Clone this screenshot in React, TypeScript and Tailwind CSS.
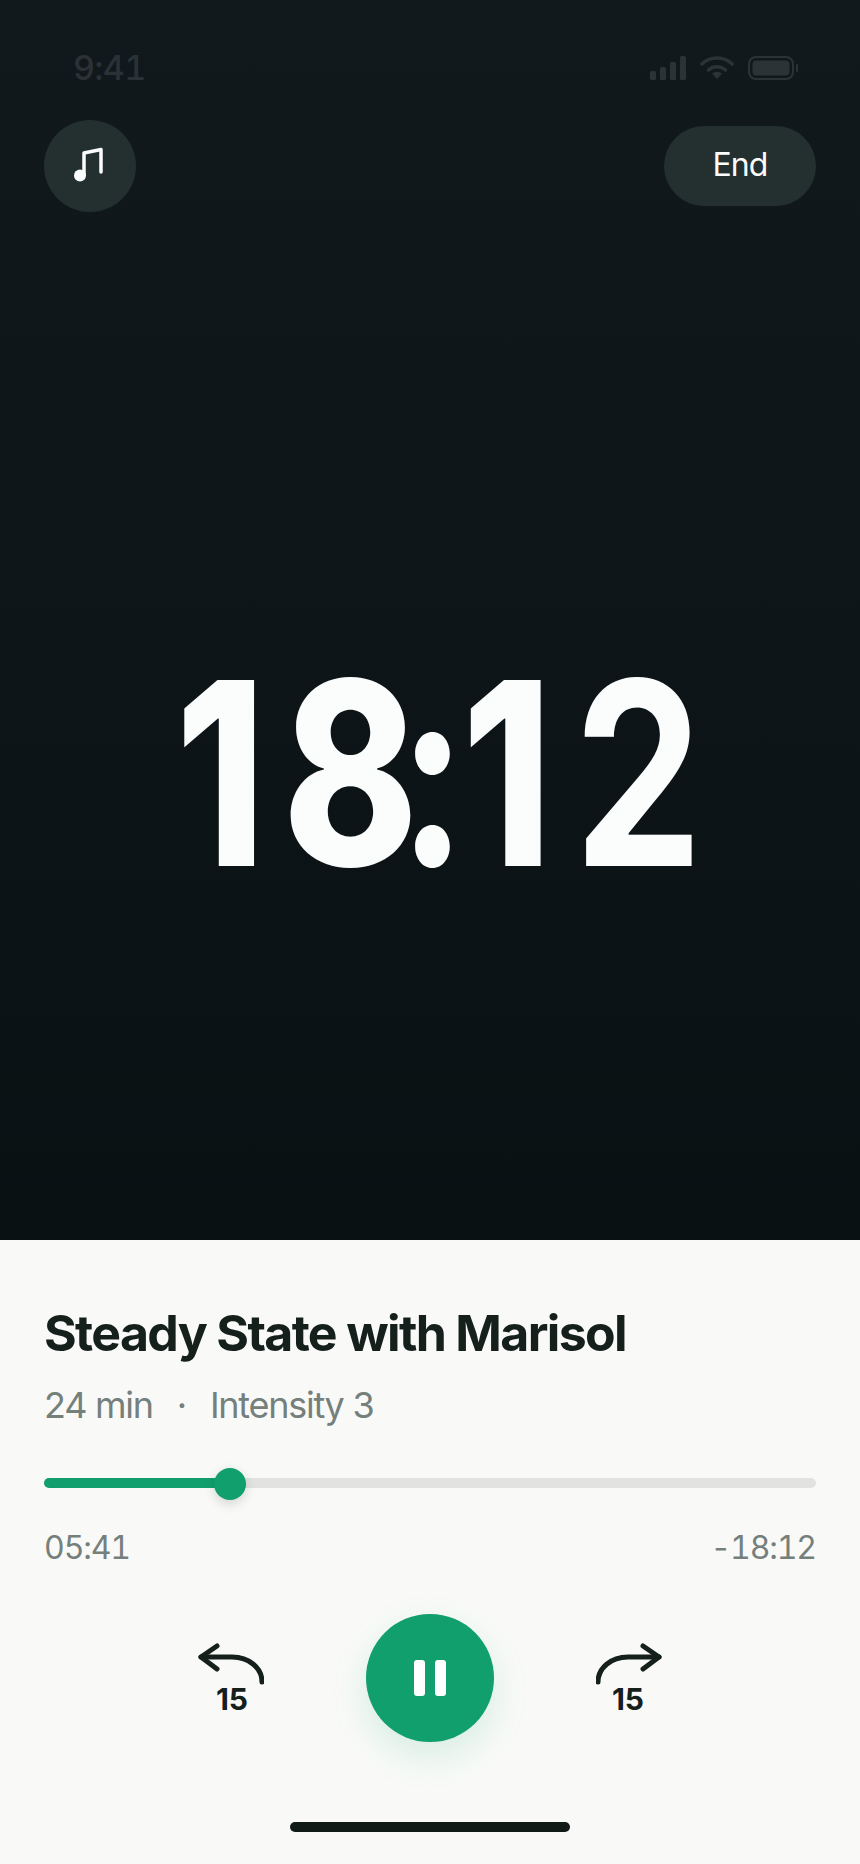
function SkipIcon({ flip }: { flip?: boolean }) {
  return (
    <svg width="68" height="46" viewBox="0 0 68 46" fill="none" stroke="#15201d" strokeWidth="5" strokeLinecap="round" strokeLinejoin="round" className={flip ? '-scale-x-100' : ''}>
      <path d="M66 40C66 26 53 15 36 15H5" />
      <path d="M21 4L5 15L21 27" />
    </svg>
  );
}

export default function App() {
  return (
    <div className="w-[860px] h-[1864px] overflow-hidden bg-[#f9faf8] font-['Inter',sans-serif]">
      <div className="h-[1240px] bg-gradient-to-b from-[#11191d] to-[#0a1113]">
        <div className="pt-[52px] h-[120px] pl-[73px] pr-[60px] flex items-start justify-between">
          <span className="text-[34px] leading-[32px] font-medium tabular-nums tracking-[-0.02em] text-[#2a3235]">9:41</span>
          <div className="flex items-center gap-[14px] mt-[4px] -translate-x-[2px]">
            <svg width="36" height="24" viewBox="0 0 36 24" fill="#2b3336">
              <rect x="0" y="15" width="6" height="9" rx="1.5" />
              <rect x="10" y="11" width="6" height="13" rx="1.5" />
              <rect x="20" y="6" width="6" height="18" rx="1.5" />
              <rect x="30" y="0" width="6" height="24" rx="1.5" />
            </svg>
            <svg width="34" height="24" viewBox="0 0 34 24" fill="none" stroke="#2b3336" strokeWidth="3.5" strokeLinecap="round">
              <path d="M2 8C10 0 24 0 32 8" />
              <path d="M8.5 14C13 9.5 21 9.5 25.5 14" />
              <path d="M12 17.5L17 23L22 17.5C19 15 15 15 12 17.5Z" fill="#2b3336" stroke="none" />
            </svg>
            <svg width="50" height="24" viewBox="0 0 50 24" fill="none">
              <rect x="1" y="1" width="44" height="22" rx="7" stroke="#2b3336" strokeWidth="2" />
              <rect x="4.5" y="4.5" width="37" height="15" rx="4" fill="#2b3336" />
              <rect x="48" y="8" width="2" height="8" rx="1" fill="#2b3336" />
            </svg>
          </div>
        </div>
        <div className="px-[44px] h-[92px] flex items-center justify-between">
          <button className="w-[92px] h-[92px] rounded-full bg-[#242f30] flex items-center justify-center">
            <svg width="40" height="40" viewBox="0 0 40 40" fill="none">
              <circle cx="10" cy="29.5" r="6" fill="#fbfcfc" />
              <path d="M14 29V7L31 3.5V26" stroke="#fbfcfc" strokeWidth="3.5" strokeLinecap="round" strokeLinejoin="round" />
            </svg>
          </button>
          <button className="w-[152px] h-[80px] rounded-full bg-[#242f30] text-[#fbfcfc] text-[32px] leading-none tracking-[-0.03em] pb-[2px]">End</button>
        </div>
        <div className="mt-[433px] text-center text-[256px] leading-none font-extrabold tracking-[-0.02em] text-[#fbfdfd] scale-x-[0.8] translate-x-[7px]">
          <span>1</span>
          <span className="ml-[26px]">8</span>
          <span className="ml-[-20px] font-bold">:</span>
          <span className="ml-[-1px]">1</span>
          <span className="ml-[32px] font-bold">2</span>
        </div>
      </div>

      <div className="px-[44px] pt-[65px]">
        <h1 className="text-[50px] leading-[56px] font-bold tracking-[-0.033em] text-[#15201d]">Steady State with Marisol</h1>
        <div className="mt-[22px] flex text-[36px] leading-[44px] tracking-[-0.035em] text-[#75807c]">
          <span>24 min</span>
          <span className="ml-[24px]">·</span>
          <span className="ml-[24px]">Intensity 3</span>
        </div>

        <div className="relative mt-[51px] h-[10px] rounded-full bg-[#e2e3e1]">
          <div className="h-full w-[186px] rounded-full bg-[#119f6e]" />
          <div className="absolute left-[170px] top-[-10px] w-[32px] h-[32px] rounded-full bg-[#119f6e] shadow-[0_4px_12px_rgba(0,0,0,0.15)]" />
        </div>

        <div className="mt-[40px] flex justify-between text-[32px] leading-[40px] tabular-nums tracking-[-0.035em] text-[#75807c]">
          <span>05:41</span>
          <span>-18:12</span>
        </div>
      </div>

      <div className="mt-[46px] flex items-center justify-center gap-[102px]">
        <button className="w-[68px] flex flex-col">
          <SkipIcon />
          <span className="-mt-[4px] pl-[4px] text-center text-[30px] leading-[30px] font-bold text-[#15201d]">15</span>
        </button>
        <button className="w-[128px] h-[128px] rounded-full bg-[#119f6e] shadow-[0_14px_36px_rgba(18,160,110,0.15)] flex items-center justify-center gap-[10px]">
          <span className="w-[11px] h-[36px] rounded-[3px] bg-white" />
          <span className="w-[11px] h-[36px] rounded-[3px] bg-white" />
        </button>
        <button className="w-[68px] flex flex-col">
          <SkipIcon flip />
          <span className="-mt-[4px] pr-[4px] text-center text-[30px] leading-[30px] font-bold text-[#15201d]">15</span>
        </button>
      </div>

      <div className="mt-[80px] mx-auto w-[280px] h-[10px] rounded-full bg-[#101a17]" />
    </div>
  );
}
